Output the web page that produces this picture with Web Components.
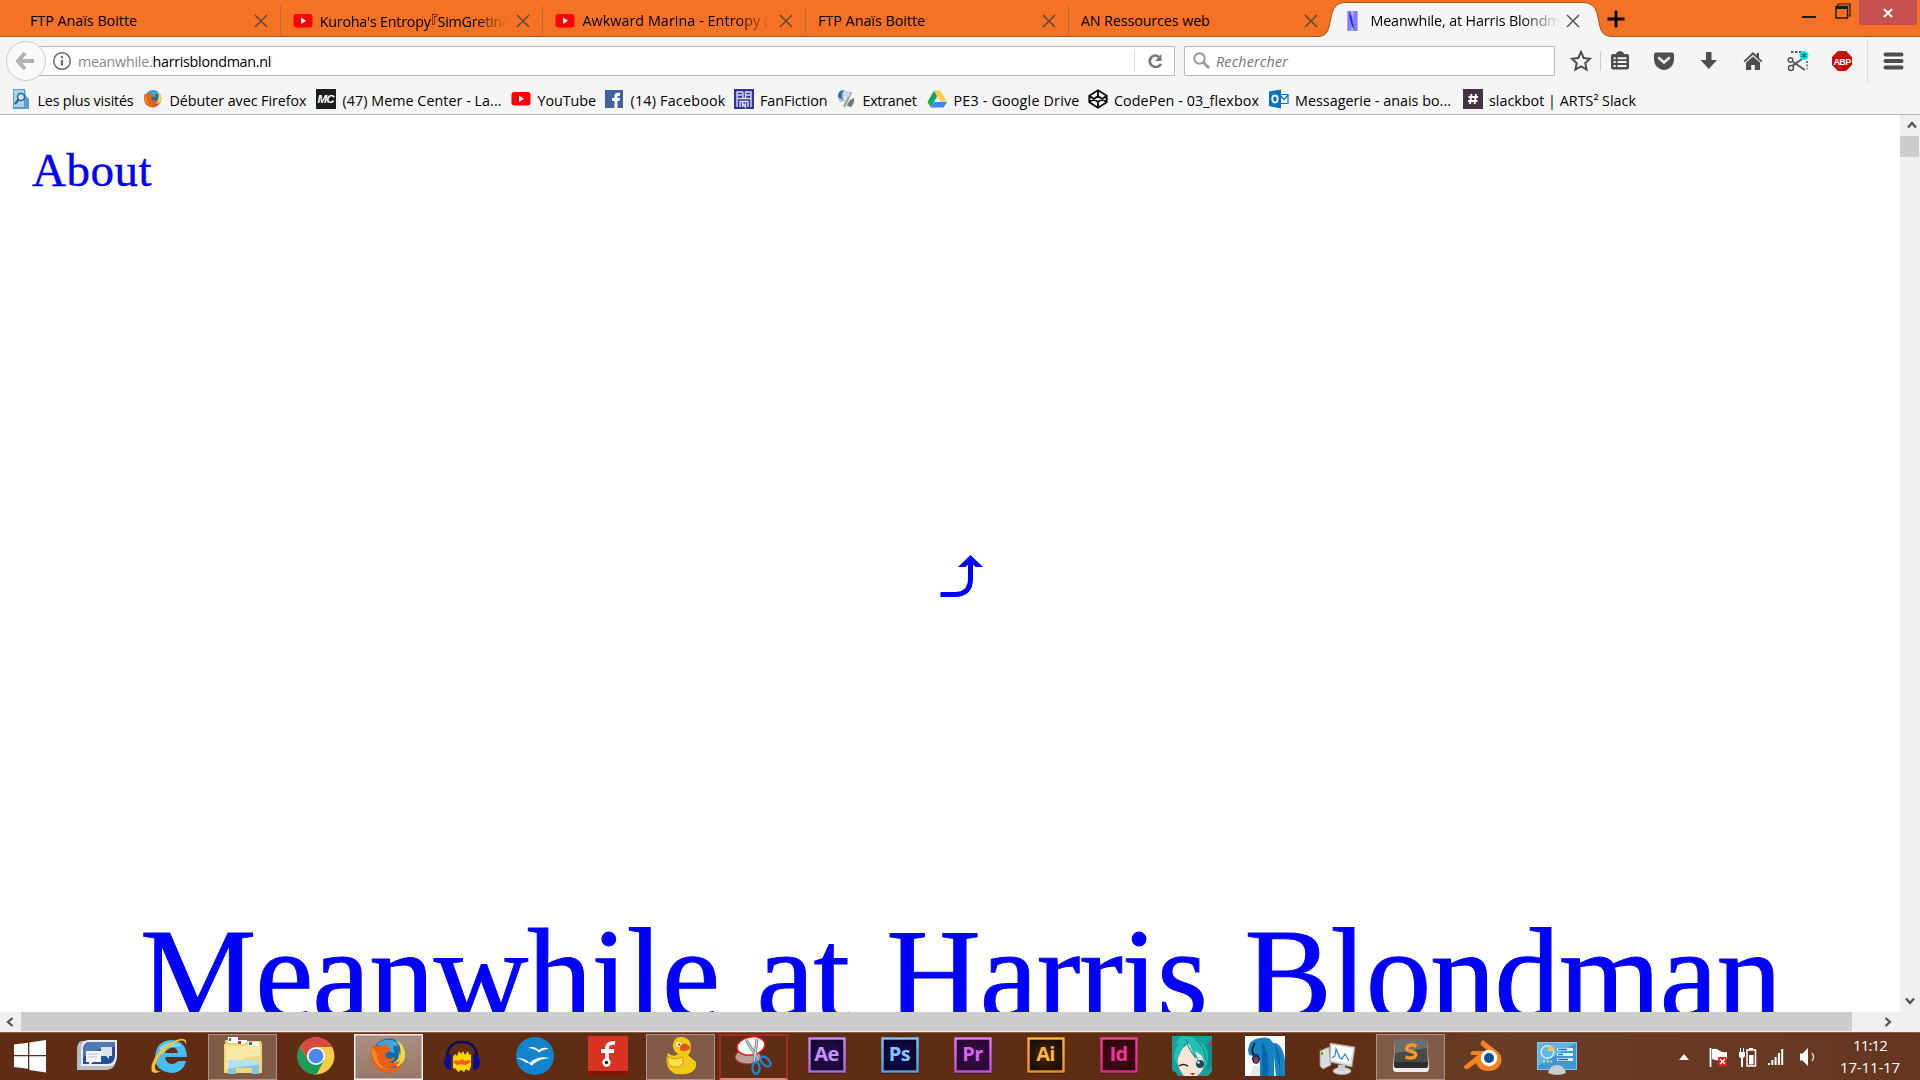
<!DOCTYPE html>
<html lang="fr">
<head>
<meta charset="utf-8">
<title>Meanwhile, at Harris Blondman</title>
<style>
html,body{margin:0;height:100%;overflow:hidden}
body{font-family:"Open Sans","Noto Sans CJK JP",sans-serif;font-size:14.3px;color:#000;background:#fff}
</style>
</head>
<body>
<desktop-screen></desktop-screen>
<script>
const define=(name,html,init)=>{
  const t=document.createElement('template');t.innerHTML=html;
  customElements.define(name,class extends HTMLElement{
    connectedCallback(){
      if(this.shadowRoot)return;
      this.attachShadow({mode:'open'}).appendChild(t.content.cloneNode(true));
      if(init)init(this,this.shadowRoot);
    }
  });
};

const firefox=`<circle cx="20" cy="19" r="16.5" fill="#1668a8"/><path d="M8 8Q20-1 32 9q-5-1-8 2l2 6-7-2Q12 15 8 8z" fill="#39a5dc"/><path d="M22 6q8 2 8 12 0 8-9 10l9 3q8-6 6-16Q34 7 27 4q6 7 4 16Q30 9 22 6z" fill="#fbd53a"/><path d="M3 9l3 2q4-3 8-1l4-4q-1 5 3 7 1 3-4 4-1 2 0 4 3 3 8 0 2 3-4 5 5 3 10-2-2 8-11 7 7 3 14-5Q31 36 20 37 6 36 2.500 24 1 16 3 9z" fill="#e8611a"/><path d="M3 11q-1 10 4 16 5 7 14 7Q8 31 8 19q-2-4-5-8z" fill="#f58b20"/>`;
const adobe=(a,c,c2,bg,bg2,txt)=>[40,40,`<defs><linearGradient id="g" x2="0" y2="1"><stop stop-color="${a}"/><stop offset="1" stop-color="${c2}"/></linearGradient><radialGradient id="b"><stop stop-color="${bg2}"/><stop offset="1" stop-color="${bg}"/></radialGradient></defs><rect x="1" y="2" width="38" height="36" fill="#0004"/><rect x="2.500" y="2.500" width="35" height="33" fill="url(#b)" stroke="url(#g)" stroke-width="2.400"/>`,txt,c];
const I={
 yt:[20,20,`<rect x=".5" y="3" width="19" height="13.500" rx="3" fill="#f00"/><path d="M8 6.500v6.500l5-3.200z" fill="#fff"/>`],
 nfav:[12,22,`<rect x=".5" y="1" width="10" height="20" fill="#aaf"/><path d="M.500 1h3l2 8 2-8h3v20h-3l-2-9-2 9h-3z" fill="#8080ff"/><path d="M2.500 1l2 6 1.500 7 2 7-3-5-2.500-9z" fill="#2222ff"/>`],
 x:[14,14,`<path d="M1 1l12 12M13 1L1 13" stroke="currentColor" stroke-width="1.500"/>`],
 plus:[18,18,`<path d="M9 .500v17M.500 9h17" stroke="#000" stroke-width="2.800"/>`],
 min:[16,16,`<path d="M1 13h14" stroke="#1c1c1c" stroke-width="2"/>`],
 restore:[16,16,`<path d="M3 3V1h12v12h-2" fill="none" stroke="#1c1c1c" stroke-width="1.200"/><rect x="1" y="3.500" width="11.500" height="11.500" fill="none" stroke="#1c1c1c" stroke-width="1.400"/><path d="M1 4.500h12" stroke="#1c1c1c" stroke-width="3"/>`],
 winx:[12,12,`<path d="M2 2l8 8M10 2l-8 8" stroke="#fff" stroke-width="2"/>`],
 back:[42,42,`<circle cx="21" cy="21" r="19.500" fill="#fafafa" stroke="#ccc"/><path d="M20 13l-7 8 7 8M14 21h15" fill="none" stroke="#b2b2b2" stroke-width="4"/>`],
 info:[20,20,`<circle cx="10" cy="10" r="8.300" fill="none" stroke="#6b6b6b" stroke-width="1.500"/><path d="M10 9v5.500M10 5v2.200" stroke="#6b6b6b" stroke-width="2.200"/>`],
 reload:[18,18,`<path d="M13 5Q9 2 5.500 5 3 8 4 11q2 4 6 4 3 0 5-3" fill="none" stroke="#777" stroke-width="2.600"/><path d="M15.500 2v7H9z" fill="#777"/>`],
 search:[20,20,`<circle cx="7.500" cy="7.500" r="5.200" fill="none" stroke="#999" stroke-width="2"/><path d="M11 11l6 6" stroke="#999" stroke-width="2.600"/>`],
 star:[22,22,`<path d="M11 2l2.700 6 6.300.700-4.700 4.400 1.300 6.400-5.600-3.200-5.600 3.200 1.300-6.400L2 8.700 8.300 8z" fill="none" stroke="#4d4d4d" stroke-width="2"/>`],
 clip:[22,22,`<path d="M4 4h3q0-2 4-3 4 1 4 3h3q2 0 2 2v11.500q0 2-2 2H4q-2 0-2-2V6q0-2 2-2z" fill="#4d4d4d"/><path d="M4.500 8.200h2.200M8.500 8.200h9M4.500 12h2.200M8.500 12h9M4.500 16h2.200M8.500 16h9" stroke="#f5f5f5" stroke-width="2"/>`],
 pocket:[22,22,`<path d="M3 2.500h16q2 0 2 2V9q0 7-6 10-4 2-8 0-6-3-6-10V4.500q0-2 2-2z" fill="#4d4d4d"/><path d="M6 8l5 4.500L16 8" fill="none" stroke="#f5f5f5" stroke-width="2.600" stroke-linecap="round"/>`],
 down:[22,22,`<path d="M8 2h5.500v8H19l-8.200 9L2.500 10H8z" fill="#4d4d4d"/>`],
 home:[22,22,`<path d="M11 2l3.500 3.500V3H17v5l3.500 3-1.200 1.200L11 4.800l-8.300 7.400L1.500 11z" fill="#4d4d4d"/><path d="M4 12.500l7-6 7 6V20h-5.200v-5H9.200v5H4z" fill="#4d4d4d"/>`],
 scis:[24,24,`<path d="M5 3h12" stroke="#555" stroke-width="1.800" stroke-dasharray="2.500 1.500"/><path d="M7 13L19 21M6 17L19 8" stroke="#555" stroke-width="2"/><circle cx="4.500" cy="11" r="2.300" fill="none" stroke="#555" stroke-width="1.500"/><circle cx="5" cy="19" r="2.500" fill="none" stroke="#555" stroke-width="1.500"/><path d="M21 12v8" stroke="#555" stroke-width="1.500" stroke-dasharray="2 1.500"/><circle cx="18" cy="6.500" r="4.500" fill="#0ee"/><path d="M18 3.500v6M15.500 5l5 3M20.500 5l-5 3" stroke="#055"/>`],
 abp:[22,22,`<path d="M7 1h8l6 6v8l-6 6H7l-6-6V7z" fill="#c70d0d"/><text x="11" y="14.700" text-anchor="middle" font-family="Liberation Sans" font-weight="700" font-size="9" letter-spacing="-.7" fill="#fff">ABP</text>`],
 menu:[22,22,`<path d="M2.500 4.500h16M2.500 11h16M2.500 17.500h16" stroke="#4d4d4d" stroke-width="4" stroke-linecap="round"/>`],
 visited:[20,20,`<path d="M2 0h12l1 7 3 3v10H2z" fill="#5f9cc3"/><path d="M3 1h10v17H3z" fill="#a9d3ea"/><circle cx="10" cy="8" r="3.500" fill="#cfe8f5" stroke="#2d6796" stroke-width="1.600"/><path d="M7.500 10.500L4 15" stroke="#2d6796" stroke-width="2.200"/>`],
 ff:[40,40,firefox],
 mc:[20,20,`<rect width="20" height="20" fill="#1d1d1d"/><text x="9.500" y="14" text-anchor="middle" font-family="Liberation Sans" font-style="italic" font-weight="700" font-size="11.500" letter-spacing="-1" fill="#fff">MC</text>`],
 fb:[20,20,`<rect x="1" y="1" width="18" height="18" fill="#4560a0"/><path d="M10.500 19v-7H8V9h2.500V7.200Q10.500 3.800 14 3.800h2v2.900h-1.500q-1 0-1 1V9H16l-.400 3h-2.100v7z" fill="#fff"/>`],
 fan:[20,20,`<rect width="20" height="20" fill="#333399"/><path d="M3 18V3h6M11 3h6v15M3 6h5M12 6h5M9 3v6M11.500 3v6M3 9.500h14M6 18v-5.500h8V18M8.500 18v-4l3 4v-4" fill="none" stroke="#dde" stroke-width="1.400"/>`],
 ext:[20,20,`<path d="M2 10Q0 2 8 1l3 2-3 4 1 5-5 1z" fill="#b5c4da"/><path d="M2 8q0-7 6-7-4 5-1 10z" fill="#3867a4"/><path d="M15 3L8 18" stroke="#9aa" stroke-width="2.500"/><path d="M11 17q1-6 7-8 1 5-3 9z" fill="#777"/><circle cx="11" cy="5" r="3" fill="#cfd8e6"/>`],
 drive:[20,20,`<path d="M7 1.500L.500 13l3.500 5.500L10.300 7z" fill="#11a861"/><path d="M7 1.500h6.500L20 13h-6.700z" fill="#ffcf48"/><path d="M7.300 13H20l-3.500 5.500H4z" fill="#3f83f4"/>`],
 cp:[20,20,`<path d="M10 1.200l8.700 5.600v6.400L10 18.800 1.300 13.200V6.800zM1.300 6.800L10 13l8.700-6.200M1.300 13.200L10 7l8.700 6.200M10 1.200V7M10 13v5.800" fill="none" stroke="#111" stroke-width="1.900" stroke-linejoin="round"/>`],
 outlook:[20,20,`<path d="M10 5.500h9v9h-9" fill="#fff" stroke="#0072c6" stroke-width="1.200"/><path d="M11 6l4 4.500L19 6" fill="none" stroke="#0072c6" stroke-width="1.300"/><path d="M0 2.500L12 .500v19L0 17z" fill="#0072c6"/><ellipse cx="6" cy="10" rx="2.700" ry="3.500" fill="none" stroke="#fff" stroke-width="1.800"/>`],
 slack:[20,20,`<rect width="20" height="20" fill="#453244"/><path d="M8.500 5L7 15M13 5l-1.500 10M5.500 8h9.500M5 12h9.500" stroke="#fff" stroke-width="1.900"/>`],
 win:[34,34,`<path d="M1 5.500L15 3.700V16H1zM16.300 3.500L33 1v15H16.300zM1 17.300h14v12.400L1 28zM16.300 17.300H33v16.200l-16.700-2.500z" fill="#fff"/>`],
 chat:[40,40,`<path d="M0 15Q0 5 5 5h34v17q0 11-9 12H0z" fill="#b9bdc2"/><path d="M4 13q0-9 8-9h28v16q0 10-9 10H4z" fill="#e9edf2"/><path d="M6 14q0-8 7-8h25v13q0 9-8 9H6z" fill="#234f94"/><path d="M6 14q0-8 7-8h25v5Q20 12 6 21z" fill="#5078b4"/><path d="M24 11h11v9h-3v3l-3-3h-5z" fill="#d9e1ec"/><path d="M9 15h15v11h-8l-4 4v-4H9z" fill="#f4f6f9"/><path d="M11 18h11M11 21h9" stroke="#b9c0ca"/>`],
 ie:[42,42,`<path d="M22 5q15 0 16 17H16q1 7 7 7 4 0 6-3h8q-3 12-15 12Q6 36 6 22 7 6 22 5zm-6 13h13q-1-6-7-6t-6 6z" fill="#45bdf0"/><path d="M10 13Q20 3 33 11q-12-1-20 9z" fill="#a2e2fb" opacity=".7"/><path d="M37 10Q39 0 25 6 8 14 3 29 0 42 12 36q-7 1-6-5Q9 18 25 8q11-6 12 2z" fill="#f8c41f"/>`],
 explorer:[40,40,`<path d="M2 4l12-1 2 2h20v30H2z" fill="#e7cf74"/><path d="M5 1h10v6H5zM14 4h10v6H14z" fill="#fff"/><path d="M6 2h2v3H6z" fill="#1a9b3e"/><path d="M15 5h3v3h-3z" fill="#d33"/><path d="M1 8h20l3-3h14l1 3v29H1z" fill="#eed87e"/><path d="M3 10h34v10Q16 20 3 34z" fill="#f7e9a3"/><path d="M25 6h11v4H25z" fill="#fff"/><path d="M26 6h3v3h-3z" fill="#27a"/><path d="M5 24h31v14h-7v-6H13v6H5z" fill="#83c4df"/><path d="M5 24h31v5q-18 1-31 4z" fill="#b8e1ef"/>`],
 chrome:[40,40,`<circle cx="20" cy="20" r="18.500" fill="#f9cc45"/><path d="M20 11h16.300A18.500 18.500 0 0 0 4 10.500L12 24z" fill="#d94b3e"/><path d="M4 10.500A18.500 18.500 0 0 0 20.500 38.500L28 24.500H12z" fill="#1b9d59"/><circle cx="20" cy="20" r="9" fill="#fff"/><circle cx="20" cy="20" r="7.300" fill="#4a87ee"/>`],
 audacity:[40,40,`<path d="M5 23Q5 6 20 6t15 17" fill="none" stroke="#0a0a5e" stroke-width="2.600"/><path d="M11 32V21l2-3 2 2 2-5 2 3 2-3 2 4 3-4 1 4 2-1v12l-2 5-3-2-2 3-3-2-3 2-2-3z" fill="#ffd800"/><path d="M11 26l3-2 3 1 3-2 3 2 4-1 2 2-3 2-3 1-4-1-4 1z" fill="#ff5a00"/><path d="M9 18v16q-7-1-7-8t7-8zM31 18v16q7-1 7-8t-7-8z" fill="#0c0c98"/>`],
 oo:[40,40,`<circle cx="20" cy="20" r="19" fill="#1283cc"/><path d="M13 12q6-3 11 2 4-4 10-1-6 0-10 3.500Q19 12 13 12zM1.500 22q9 0 13 5 8-8 20-5-12 1-18 8-3-4-5-3-5-4-10-5z" fill="#fff"/>`],
 fritz:[40,40,`<rect width="40" height="35" fill="#d93122"/><rect y="35" width="40" height="5" fill="#851508"/><path d="M27 7q-8-1-8 6v12M13 15h13" fill="none" stroke="#fff" stroke-width="3.800"/><circle cx="18.500" cy="26.500" r="3" fill="#222" stroke="#fff" stroke-width="2.400"/>`],
 duck:[40,40,`<path d="M12 9Q13 0 21 1q9 1 9 10 0 5-3 8 2 2 8 7 1 10-10 12-14 2-18-7-3-7 0-14 6 5 10 1-5-3-5-9z" fill="#f3cb17"/><path d="M7 20q5 5 14 1 4 6-3 10-9 1-11-4z" fill="#ffe045" stroke="#c99408"/><circle cx="17.500" cy="8.500" r="2.300" fill="#fff"/><circle cx="18" cy="8.500" r="1" fill="#333"/><path d="M19 10q5-5 9 0l2 2q-5 5-11 2z" fill="#e3541b"/>`],
 snip:[40,40,`<ellipse cx="14" cy="21" rx="13" ry="7" fill="#b99e93" stroke="#a33"/><ellipse cx="17" cy="10" rx="14" ry="9" transform="rotate(-10 17 10)" fill="#f7f7f7" stroke="#d22" stroke-width="1.500"/><path d="M12 4l13 20M23 3l-3 24" stroke="#7d858c" stroke-width="3"/><path d="M12 4l13 20M23 3l-3 24" stroke="#dde1e5"/><ellipse cx="31.500" cy="25.500" rx="3.500" ry="6" transform="rotate(-48 31.500 25.500)" fill="none" stroke="#2484c4" stroke-width="2.500"/><ellipse cx="22" cy="32" rx="3.500" ry="6" fill="none" stroke="#2484c4" stroke-width="2.500"/>`],
 ae:adobe('#c48dfb','#c794ff','#a26fdd','#17082f','#29105a','Ae'),
 ps:adobe('#7fc4f7','#83c7fb','#5b9ed0','#0a0830','#150c5e','Ps'),
 pr:adobe('#e57bff','#d564f2','#c24fe0','#2a0833','#3c0c48','Pr'),
 ai:adobe('#ffb435','#ffb54a','#f09517','#1c0f00','#4a2a00','Ai'),
 id:adobe('#f0439a','#e83a94','#e02a85','#33040f','#48081a','Id'),
 miku:[40,40,`<rect width="40" height="40" fill="#14a39c"/><path d="M0 34q4 2 6 6H0zM36 40l4-5v5z" fill="#5f2d16"/><path d="M5 20Q11 10 18 7q8 4 15 15 0 12-8 18H12Q5 32 5 20z" fill="#fbe3d4"/><path d="M9 0Q1 8 1 20l4 9 1-7 6-13 4-4 5 12 7 11-5-13 7 5 4 12 2-12Q32 0 9 0z" fill="#25beb5"/><path d="M6 7Q1 14 1 24M14 3q2 10 10 19M24 3q10 10 10 22" fill="none" stroke="#0f8f88" stroke-width="1.200"/><path d="M7 30q4-3 9 0" stroke="#222" fill="none" stroke-width="1.500"/><ellipse cx="28" cy="28" rx="4" ry="4" fill="#164a58"/><circle cx="26.500" cy="26.500" r="1.200" fill="#fff"/><path d="M18 37h5l-2 2.500z" fill="#c22"/><path d="M34 8q5 12-1 27l7-4V4z" fill="#108f8c"/><path d="M38 5h2v5h-2z" fill="#d24"/>`],
 miku2:[40,40,`<rect width="40" height="40" fill="#fff"/><path d="M3 14Q4 3 15 2q10-2 13 5 9-1 12 17v16h-9l-2-20v20H15V22L4 19z" fill="#1583c4"/><path d="M17 6q8 8 6 34h-6zM30 8q6 9 5 28z" fill="#0a67ab"/><path d="M10 7q-6 8 1 15" fill="none" stroke="#223" stroke-width="2"/><ellipse cx="11" cy="23" rx="4" ry="5" fill="#133a75"/><ellipse cx="11" cy="24" rx="2" ry="3" fill="#c24"/><path d="M8 30l7-2v12H5z" fill="#e8e8e8"/>`],
 perf:[40,40,`<path d="M2 15l9-4 2 18-8 4-3-3z" fill="#dcdcdc" stroke="#999" stroke-width=".8"/><path d="M3 16h2v3H3z" fill="#2b2"/><path d="M12 7l25 4-3 20-22-5z" fill="#d9dce0" stroke="#999" stroke-width=".8"/><path d="M14 9l21 3.500-3 15.500-19-4z" fill="#fbfdff"/><path d="M14 22l3-2 1-7 4 9 2 1 3-5 4 7" fill="none" stroke="#2687c9" stroke-width="1.200"/><ellipse cx="24" cy="35" rx="9" ry="3.500" fill="#ddd" stroke="#aaa" stroke-width=".8"/><path d="M20 29h7v6h-7z" fill="#ccc"/>`],
 sublime:[40,40,`<path d="M4 4h32l2 28q0 4-3 4H5q-3 0-3-4z" fill="#ececec"/><path d="M6 3h28q2 0 2 2l1 22q0 2-2 2H5q-2 0-2-2L4 5q0-2 2-2z" fill="#4a4a4a"/><path d="M3 26h34v4q0 2-2 2H5q-2 0-2-2z" fill="#2e2e2e"/><path d="M6 3h28q2 0 2 2v7L4 17V5q0-2 2-2z" fill="#6e6e6e"/><path d="M25.500 10q-5-2-8.500 0-2.500 3 0 4.500l5.500 1.500q4 2 1 5-4 2-9 0" fill="none" stroke="#ff9a2a" stroke-width="3.400"/>`],
 blender:[40,40,`<path d="M19 4l15 12q5 5 3 11-3 8-13 8-9 0-12-8l-8 6q-4 1-4-3l14-11H8q-3-1 0-4h16l-7-6q-1-3 2-5z" fill="#f5831f"/><circle cx="25" cy="22" r="8.300" fill="#fff"/><circle cx="25" cy="22" r="5" fill="#12508f"/>`],
 cpanel:[40,40,`<rect x=".5" y="6.500" width="39" height="27" fill="#3c97d3" stroke="#82c8ee"/><path d="M1 7h38L1 30z" fill="#62b4e4"/><circle cx="10.500" cy="16" r="6.300" fill="#65b8e6" stroke="#d4eefb" stroke-width="1.400"/><path d="M11 15V9.500q6 0 6 5.500z" fill="#ffc14d"/><path d="M20 13.500h16M20 18.500h16M20 23.500h16" stroke="#d6f0ff" stroke-width="3"/><path d="M21 13.500h9M21 18.500h5M21 23.500h10" stroke="#1571b5" stroke-width="1.600"/><path d="M6 25.500h2M10 25.500h2" stroke="#9ef" stroke-width="2"/><path d="M13 25.500h2" stroke="#fb4" stroke-width="2"/><path d="M11 37q2-8 9-8t9 8q-9 4-18 0z" fill="#c9cbcd"/>`],
 tri:[12,8,`<path d="M6 1l5 6H1z" fill="#f1f1f1"/>`],
 flag:[20,22,`<path d="M2.500 2v19" stroke="#fff" stroke-width="1.800"/><path d="M4 3q5-1 8 2 3 2 7 1v8q-8 2-15-1z" fill="#fff"/><rect x="10" y="11" width="9" height="9" rx="1.500" fill="#d32020"/><path d="M12 13l5 5M17 13l-5 5" stroke="#fff" stroke-width="1.400"/>`],
 batt:[20,22,`<rect x="9" y="4" width="8.500" height="16" fill="none" stroke="#fff" stroke-width="1.500"/><path d="M11 2h4v2h-4z" fill="#fff"/><path d="M11 9h4.500v9.500H11zM1 6h6v4q-1 2-2 2v9H3v-9q-2 0-2-2zM2 2h1v4H2zM5 2h1v4H5z" fill="#fff"/>`],
 sig:[18,18,`<path d="M1 15h2v2H1zM4.300 12h2v5h-2zM7.600 9h2v8h-2zM10.900 5h2v12h-2zM14.200 1h2v16h-2z" fill="#fff"/>`],
 snd:[20,20,`<path d="M2 6.500h2.500L10 1v18l-5.500-5.500H2z" fill="#fff"/><path d="M14 6q3 4 0 8" fill="none" stroke="#ddd" stroke-width="1.400"/>`],
 turn:[44,44,`<path d="M.500 39.500h14q16 0 16-16V4" fill="none" stroke="#00f" stroke-width="5"/><path d="M30.500 0L43 12h-7.500l-5-5-5 5H18z" fill="#00f"/>`],
 up:[10,10,`<path d="M1 7.500l4-4.500 4 4.500" fill="none" stroke="#505050" stroke-width="2.200"/>`]
};

/* <px-icon name w h>: one drawing from the icon table, with an optional two-letter label */
define('px-icon',`<style>:host{display:block;flex:none;line-height:0}div{display:grid;place-items:center}div>*{grid-area:1/1}svg{display:block}span{font-weight:700;font-size:20px;line-height:24px;height:24px;letter-spacing:-.6px;margin-bottom:4px;z-index:1}</style>`,(el,r)=>{
  const [vw,vh,s,label,color]=I[el.getAttribute('name')];
  const w=el.getAttribute('w')||vw,h=el.getAttribute('h')||(w*vh/vw);
  const b=document.createElement('div');
  b.innerHTML=`<svg width="${w}" height="${h}" viewBox="0 0 ${vw} ${vh}">${s}</svg>`+(label?`<span style="color:${color}">${label}</span>`:'');
  r.appendChild(b);
});

/* <fit-text w>: single line of text tracked to an exact width */
define('fit-text',`<style>:host{display:block;white-space:pre;flex:none}span{display:inline-block}</style><span><slot></slot></span>`,(el,r)=>{
  const s=r.querySelector('span'),w=+el.getAttribute('w'),n=el.textContent.length;
  el.style.width=w+'px';
  let ls=0;
  for(let i=0;i<3;i++){ls+=(w-s.getBoundingClientRect().width)/n;s.style.letterSpacing=ls+'px';}
});

define('browser-tab',`<style>
:host{display:flex;box-sizing:border-box;width:262.7px;height:36px;padding:5px 13px 0 12px;align-items:center;flex:none;background:linear-gradient(#b9663a,#b9663a) 100% 6px/1px 28px no-repeat}
:host([last]){background:none}
.t{flex:1;min-width:0;overflow:hidden;margin-right:8px}
:host([fade]) .t{-webkit-mask:linear-gradient(90deg,#000 82%,transparent)}
px-icon.f{margin-right:7px}
px-icon.c{color:#5f4a3c}
</style><div class="t"><slot></slot></div><px-icon class="c" name="x"></px-icon>`,(el,r)=>{
  const n=el.getAttribute('icon');
  if(!n)return;
  const f=document.createElement('px-icon');f.className='f';f.setAttribute('name',n);
  r.insertBefore(f,r.querySelector('.t'));
});

define('active-tab',`<style>
:host{display:block;width:292px;height:38px;flex:none;margin-left:-12px;z-index:1}
.g{display:grid}.g>*{grid-area:1/1}
.row{display:flex;align-items:center;padding:5px 34px 0 28px;height:31px}
.t{flex:1;overflow:hidden;min-width:0;margin:0 6px 0 11px;-webkit-mask:linear-gradient(90deg,#000 80%,transparent)}
px-icon{color:#555}
</style><div class="g"><svg width="292" height="38" viewBox="0 0 292 38"><path d="M0 38V36.500Q8 36 10 27L13 13Q16 2.500 26 2.500H264Q275 2.500 278 13L281 27Q283 36 292 36.500V38z" fill="#f5f5f5"/><path d="M0 36.500Q8 36 10 27L13 13Q16 2.500 26 2.500H264Q275 2.500 278 13L281 27Q283 36 292 36.500" fill="none" stroke="#a9551f"/></svg>
<div class="row"><px-icon name="nfav"></px-icon><div class="t"><slot></slot></div><px-icon name="x"></px-icon></div></div>`);

define('tab-strip',`<style>
:host{display:flex;height:37px;background:linear-gradient(#a9551f,#a9551f) 0 36px/100% 1px no-repeat #f57224;padding-left:18px}
.plus{margin:10px 0 0 -4px}
.ctl{display:flex;margin-left:auto;margin-right:3px;align-items:flex-start}
.close{width:58px;height:25px;background:#c75050;display:grid;place-items:center;margin-left:8px}
</style>
<browser-tab><fit-text w="107">FTP Anaïs Boitte</fit-text></browser-tab>
<browser-tab icon="yt" fade><fit-text w="190" style="font-feature-settings:'halt'">Kuroha's Entropy『SimGretina</fit-text></browser-tab>
<browser-tab icon="yt" fade><fit-text w="186">Awkward Marina - Entropy (</fit-text></browser-tab>
<browser-tab><fit-text w="107">FTP Anaïs Boitte</fit-text></browser-tab>
<browser-tab last><fit-text w="129">AN Ressources web</fit-text></browser-tab>
<active-tab><fit-text w="190">Meanwhile, at Harris Blondm</fit-text></active-tab>
<px-icon class="plus" name="plus"></px-icon>
<div class="ctl"><px-icon name="min" style="margin:4px 18px 0 0"></px-icon><px-icon name="restore" style="margin:3px 0 0"></px-icon><div class="close"><px-icon name="winx"></px-icon></div></div>`);

define('nav-bar',`<style>
:host{display:flex;align-items:center;height:48px;background:#f5f5f5}
.url,.s{display:flex;align-items:center;box-sizing:border-box;height:30px;background:#fff;border:1px solid #b1bac4;flex:none;border-radius:1px}
.back{margin-left:5px;z-index:1}
.url{width:1149px;margin-left:-21px;padding-left:25px}
.rl{border-left:1px solid #ddd;margin:0 10px 0 auto;padding-left:11px;height:22px;display:flex;align-items:center}
.s{width:371px;margin-left:9px;padding-left:7px;font-style:italic;color:#737373}
.tools{display:flex;align-items:center;flex:1}
.v{width:1px;background:#ccc;flex:none}
</style><px-icon class="back" name="back"></px-icon>
<div class="url"><px-icon name="info" style="margin-right:6px"></px-icon><fit-text w="74.500" style="color:#888">meanwhile.</fit-text><fit-text w="118.500">harrisblondman.nl</fit-text><div class="rl"><px-icon name="reload"></px-icon></div></div>
<div class="s"><px-icon name="search"></px-icon><fit-text w="72" style="margin-left:4px">Rechercher</fit-text></div>
<div class="tools"><px-icon name="star" style="margin-left:15px"></px-icon><div class="v" style="height:20px;margin:0 8px"></div><px-icon name="clip"></px-icon><px-icon name="pocket" style="margin-left:22px"></px-icon><px-icon name="down" style="margin-left:23px"></px-icon><px-icon name="home" style="margin-left:22px"></px-icon><px-icon name="scis" style="margin-left:22px"></px-icon><px-icon name="abp" style="margin-left:21px"></px-icon><div class="v" style="height:44px;margin:0 15px 0 14px;background:#ddd"></div><px-icon name="menu"></px-icon></div>`);

define('book-mark',`<style>:host{display:flex;align-items:center;flex:none}px-icon{margin-right:6.5px;margin-top:-3px}</style><slot></slot>`,(el,r)=>{
  el.style.width=el.getAttribute('span')+'px';
  const i=document.createElement('px-icon');i.setAttribute('name',el.getAttribute('icon'));i.setAttribute('w',20);
  r.insertBefore(i,r.querySelector('slot'));
});
const marks=[['visited',132,96,'Les plus visités'],['ff',173,137,'Débuter avec Firefox'],['mc',195,159,'(47) Meme Center - La...'],['yt',93,58.5,'YouTube'],['fb',129.5,95,'(14) Facebook'],['fan',102.5,67.5,'FanFiction'],['ext',91,54,'Extranet'],['drive',160.5,126,'PE3 - Google Drive'],['cp',181,145,'CodePen - 03_flexbox'],['outlook',194,156,'Messagerie - anais bo...'],['slack',172,147,'slackbot | ARTS² Slack']];
define('bookmark-bar',`<style>:host{display:flex;box-sizing:border-box;height:30px;background:#f5f5f5;border-bottom:1px solid #b6b6b6;padding:2px 0 0 11px}</style>`+marks.map(m=>`<book-mark icon="${m[0]}" span="${m[1]}"><fit-text w="${m[2]}">${m[3]}</fit-text></book-mark>`).join(''));

define('web-page',`<style>
:host{display:grid;grid-template:897px 20px/1900px 20px;background:#f0f0f0;overflow:hidden}
.view{background:#fff;overflow:hidden;color:#00f;font-family:"Liberation Serif",serif}
.canvas{width:1923px;display:flex;flex-direction:column;align-items:center}
.about{align-self:flex-start;margin:25px 0 0 32px;font-size:47px;line-height:60px;-webkit-text-stroke:.4px #00f}
.title{margin-top:301px;font-size:131px;line-height:150px;-webkit-text-stroke:1px #00f;word-spacing:6px;margin-left:-2px}
.turn{margin-top:355px}
.vb{display:flex;flex-direction:column;align-items:center;padding:5px 0 6px;justify-content:space-between}
.vb i{width:19px;height:21px;background:#cdcdcd;display:block;margin:6px 1px 0 0}
.hb{display:flex;align-items:center;height:19px;grid-column:1/3}
.hb i{width:1831px;height:19px;background:#cdcdcd;margin:0 31px 0 6px}
</style><div class="view"><div class="canvas"><fit-text class="about" w="120">About</fit-text><px-icon class="turn" name="turn"></px-icon><fit-text class="title" w="1641">Meanwhile at Harris Blondman</fit-text></div></div>
<div class="vb"><div><px-icon name="up" style="margin-left:4px"></px-icon><i></i></div><px-icon name="up" style="transform:scaleY(-1)"></px-icon></div>
<div class="hb"><px-icon name="up" style="transform:rotate(-90deg);margin-left:5px"></px-icon><i></i><px-icon name="up" style="transform:rotate(90deg)"></px-icon></div>`);

define('task-button',`<style>
:host{display:grid;place-items:center;box-sizing:border-box;width:69px;height:46px;margin-right:4px;flex:none;border:1px solid transparent}
px-icon{margin-bottom:2px}
:host([open]){background:#825b48;border-color:#ad9488}
:host([front]){background:linear-gradient(#a98f82,#987767);border-color:#f3eeeb;box-shadow:inset 0 0 0 1px #c7b7ae}
:host([alert]){border:2px solid #a92a22;border-bottom:2px solid #d98b82}
</style>`,(el,r)=>{
  const i=document.createElement('px-icon'),n=el.getAttribute('icon');
  i.setAttribute('name',n);i.setAttribute('w',n==='ie'?42:40);r.appendChild(i);
});
const tasks=['chat','ie','explorer open','chrome','ff front','audacity','oo','fritz','duck open','snip alert','ae','ps','pr','ai','id','miku','miku2','perf','sublime open','blender','cpanel'];
define('task-bar',`<style>
:host{display:flex;align-items:center;height:48px;box-sizing:border-box;border-top:1px solid #895e49;background:linear-gradient(90deg,#602d14,#5f2d14 70%,#693d26 78%,#663620);color:#fff}
.tray{display:flex;align-items:center;margin-left:auto}
.clock{display:flex;flex-direction:column;align-items:center;line-height:22px;width:60px;margin:0 20px 0 22px;font-size:15px;padding-bottom:1px}
</style><px-icon name="win" style="margin:0 15px 2px 13px"></px-icon>`+tasks.map(t=>{const[a,b]=t.split(' ');return `<task-button icon="${a}" ${b||''}></task-button>`}).join('')+
`<div class="tray"><px-icon name="tri" style="margin-right:18px"></px-icon><px-icon name="flag" style="margin-right:10px"></px-icon><px-icon name="batt" style="margin-right:9px"></px-icon><px-icon name="sig" style="margin-right:13px"></px-icon><px-icon name="snd"></px-icon><div class="clock"><fit-text w="34">11:12</fit-text><fit-text w="60">17-11-17</fit-text></div></div>`);

define('desktop-screen',`<style>:host{display:flex;flex-direction:column;width:1920px;height:1080px;overflow:hidden}</style>
<tab-strip></tab-strip><nav-bar></nav-bar><bookmark-bar></bookmark-bar><web-page></web-page><task-bar></task-bar>`);
</script>
</body>
</html>
